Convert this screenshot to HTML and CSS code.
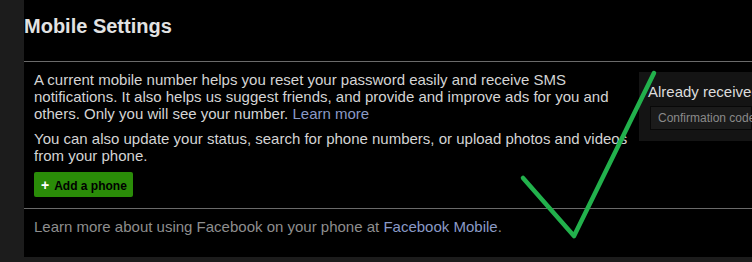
FILE: index.html
```html
<!DOCTYPE html>
<html>
<head>
<meta charset="utf-8">
<link rel="stylesheet" href="styles.css">
</head>
<body>
<div class="panel">
  <h1 class="title">Mobile Settings</h1>
  <div class="content">
    <div class="main">
      <p class="para">A current mobile number helps you reset your password easily and receive SMS notifications. It also helps us suggest friends, and provide and improve ads for you and others. Only you will see your number. <a class="link" href="#">Learn more</a></p>
      <p class="para">You can also update your status, search for phone numbers, or upload photos and videos from your phone.</p>
      <button class="add-btn"><span class="plus">+</span>Add a phone</button>
    </div>
    <div class="aside">
      <div class="aside-title">Already received a confirmation code?</div>
      <div class="code-input">Confirmation code</div>
    </div>
  </div>
  <div class="footer">Learn more about using Facebook on your phone at <a class="link" href="#">Facebook Mobile</a>.</div>
  <svg class="check" width="752" height="262" viewBox="0 0 752 262"><polyline points="523,178 574,236 654,73" fill="none" stroke="#22b14c" stroke-width="4.5" stroke-linecap="round" stroke-linejoin="round"/></svg>
</div>
</body>
</html>
```
FILE: styles.css
```css
html, body {
  margin: 0;
  padding: 0;
  background: #1c1c1c;
  width: 752px;
  height: 262px;
  overflow: hidden;
  font-family: "Liberation Sans", Arial, sans-serif;
}
.panel {
  margin-left: 24px;
  width: 728px;
  height: 257px;
  background: #000;
  overflow: hidden;
}
.title {
  margin: 0;
  height: 62px;
  box-sizing: border-box;
  padding-top: 15px;
  font-size: 20px;
  font-weight: bold;
  color: #e2e2e2;
  border-bottom: 1px solid #6a6a6a;
}
.content {
  display: flex;
  height: 146px;
  border-bottom: 1px solid #6a6a6a;
}
.main {
  width: 594px;
  padding: 9px 0 0 10px;
  flex: none;
}
.para {
  margin: 0 0 8px 0;
  font-size: 15px;
  line-height: 17px;
  color: #d4d4d4;
}
.link {
  color: #8a9ac6;
  text-decoration: none;
}
.add-btn {
  display: block;
  margin-top: 6px;
  width: 99px;
  height: 25px;
  padding: 0 0 0 7px;
  text-align: left;
  background: #2a8c08;
  border: none;
  border-radius: 2px;
  font-family: "Liberation Sans", Arial, sans-serif;
  font-size: 12px;
  font-weight: bold;
  color: #000;
}
.plus {
  color: #fff;
  font-size: 14px;
  margin-right: 5px;
}
.aside {
  margin: 10px 0 0 11px;
  flex: 1;
  height: 69px;
  background: #141414;
  padding: 11px 0 0 9px;
  box-sizing: border-box;
  white-space: nowrap;
  overflow: hidden;
}
.aside-title {
  font-size: 15px;
  color: #dcdcdc;
}
.code-input {
  margin-top: 6px;
  margin-left: 2px;
  height: 24px;
  box-sizing: border-box;
  background: #1b1b1b;
  border: 1px solid #080808;
  padding: 4px 0 0 7px;
  font-size: 12px;
  color: #8a8a8a;
}
.footer {
  padding: 9px 0 0 10px;
  font-size: 15px;
  color: #8e8e8e;
}
.check {
  position: absolute;
  left: 0;
  top: 0;
  pointer-events: none;
}
```
